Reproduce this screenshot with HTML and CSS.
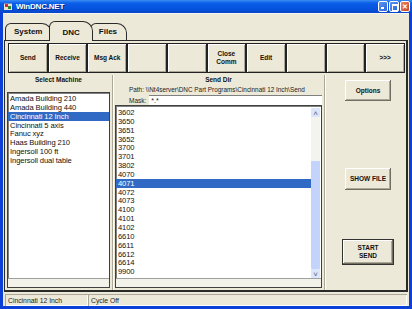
FILE: index.html
```html
<!DOCTYPE html>
<html lang="en">
<head>
    <meta charset="UTF-8">
    <title>WinDNC.NET</title>
    <link rel="stylesheet" href="styles.css">
</head>
<body>
    <div class="window">
        <div class="titlebar">
            <svg class="app-icon" width="9" height="9" viewBox="0 0 9 9">
                <rect x="0" y="1" width="8" height="7" fill="#e8e4d0"/>
                <rect x="1" y="2" width="3" height="3" fill="#d23"/>
                <rect x="4" y="4" width="3" height="3" fill="#2a8a2a"/>
                <rect x="0" y="1" width="8" height="1" fill="#6a8ad8"/>
            </svg>
            <span class="title">WinDNC.NET</span>
            <div class="caption-buttons">
                <span class="cap cap-min"><i></i></span>
                <span class="cap cap-max"><i></i></span>
                <span class="cap cap-close">&#x2715;</span>
            </div>
        </div>

        <div class="client">
            <div class="tabs">
                <div class="tab">System</div>
                <div class="tab active">DNC</div>
                <div class="tab">Files</div>
            </div>

            <div class="panel">
                <div class="toolbar">
                    <button>Send</button>
                    <button>Receive</button>
                    <button>Msg Ack</button>
                    <button></button>
                    <button></button>
                    <button>Close<br>Comm</button>
                    <button>Edit</button>
                    <button></button>
                    <button></button>
                    <button>&gt;&gt;&gt;</button>
                </div>

                <div class="content">
                    <div class="col col-machines">
                        <div class="heading">Select Machine</div>
                        <div class="listbox machines">
                            <div class="rows">
                                <div class="row">Amada Building 210</div>
                                <div class="row">Amada Building 440</div>
                                <div class="row selected">Cincinnati 12 Inch</div>
                                <div class="row">Cincinnati 5 axis</div>
                                <div class="row">Fanuc xyz</div>
                                <div class="row">Haas Building 210</div>
                                <div class="row">Ingersoll 100 ft</div>
                                <div class="row">Ingersoll dual table</div>
                            </div>
                            <div class="hscroll"></div>
                        </div>
                    </div>

                    <div class="col col-files">
                        <div class="heading">Send Dir</div>
                        <div class="path">Path: \\Nt4server\DNC Part Programs\Cincinnati 12 Inch\Send</div>
                        <div class="mask">
                            <span class="mask-label">Mask:</span>
                            <div class="mask-input">*.*</div>
                        </div>
                        <div class="listbox files">
                            <div class="files-body">
                                <div class="rows">
                                    <div class="row">3602</div>
                                    <div class="row">3650</div>
                                    <div class="row">3651</div>
                                    <div class="row">3652</div>
                                    <div class="row">3700</div>
                                    <div class="row">3701</div>
                                    <div class="row">3802</div>
                                    <div class="row">4070</div>
                                    <div class="row selected">4071</div>
                                    <div class="row">4072</div>
                                    <div class="row">4073</div>
                                    <div class="row">4100</div>
                                    <div class="row">4101</div>
                                    <div class="row">4102</div>
                                    <div class="row">6610</div>
                                    <div class="row">6611</div>
                                    <div class="row">6612</div>
                                    <div class="row">6614</div>
                                    <div class="row">9900</div>
                                </div>
                                <div class="vscroll">
                                    <span class="arrow">&#x2C4;</span>
                                    <div class="track"><div class="thumb"></div></div>
                                    <span class="arrow">&#x2C5;</span>
                                </div>
                            </div>
                            <div class="hscroll"></div>
                        </div>
                    </div>

                    <div class="col col-actions">
                        <button class="action options">Options</button>
                        <button class="action show-file">SHOW FILE</button>
                        <button class="action start-send">START<br>SEND</button>
                    </div>
                </div>
            </div>

            <div class="statusbar">
                <div class="status-cell machine">Cincinnati 12 Inch</div>
                <div class="status-cell cycle">Cycle Off</div>
            </div>
        </div>
    </div>
</body>
</html>
```

FILE: styles.css
```css
body {
    margin: 0;
    font-family: 'Liberation Sans', Arial, sans-serif;
    background: #ffffff;
}

.window {
    width: 412px;
    height: 309px;
    box-sizing: border-box;
    display: flex;
    flex-direction: column;
    background: #0b3fd6;
    padding: 0 3px 3px;
}

.titlebar {
    height: 16px;
    margin: 0 -3px;
    display: flex;
    align-items: center;
    padding: 0 2px 0 4px;
    background: linear-gradient(to bottom, #3b8cf5 0%, #0a5de6 25%, #0551dd 70%, #0a46c8 100%);
}

.app-icon {
    margin-right: 3px;
}

.title {
    color: #ffffff;
    font-size: 8px;
    font-weight: bold;
    letter-spacing: -0.2px;
    text-shadow: 1px 1px 0 #0a2a88;
}

.caption-buttons {
    margin-left: auto;
    display: flex;
    gap: 1px;
}

.cap {
    width: 10px;
    height: 11px;
    border: 1px solid #ffffff;
    border-radius: 2px;
    background: linear-gradient(to bottom right, #5d95f3, #2a63db);
    position: relative;
    box-sizing: border-box;
    color: #ffffff;
    font-size: 7px;
    font-weight: bold;
    line-height: 9px;
    text-align: center;
}

.cap-min i {
    position: absolute;
    left: 2px;
    bottom: 2px;
    width: 3px;
    height: 2px;
    background: #ffffff;
}

.cap-max i {
    position: absolute;
    left: 2px;
    top: 2px;
    width: 4px;
    height: 4px;
    border: 1px solid #ffffff;
    border-top-width: 2px;
}

.cap-close {
    background: linear-gradient(to bottom right, #e8876a, #c94520);
}

.client {
    flex: 1;
    background: #ece9d8;
    display: flex;
    flex-direction: column;
}

.tabs {
    display: flex;
    align-items: flex-end;
    height: 26px;
    padding-left: 2px;
    border-top: 1px solid #f6f5ee;
}

.tab {
    height: 16px;
    margin-right: -3px;
    padding: 0 9px 0 8px;
    border: 1px solid #2a2a2a;
    border-bottom: none;
    border-radius: 6px 10px 0 0;
    background: #ece9d8;
    font-size: 8px;
    font-weight: bold;
    line-height: 16px;
    color: #111;
}

.tab.active {
    height: 19px;
    line-height: 21px;
    padding: 0 12px;
    position: relative;
    z-index: 1;
    margin-bottom: -1px;
}

.panel {
    height: 249px;
    margin: 0 1px 0 1px;
    border: 1px solid #2a2a2a;
    border-right-width: 2px;
    border-bottom-width: 2px;
    display: flex;
    flex-direction: column;
}

.toolbar {
    display: grid;
    grid-template-columns: repeat(10, 1fr);
    padding: 2px 1px 0 3px;
    height: 30px;
}

button {
    font-family: 'Liberation Sans', Arial, sans-serif;
    font-size: 6.5px;
    font-weight: bold;
    color: #111;
    background: #ece9d8;
    border: 1px solid #222;
    box-shadow: inset 1px 1px 0 #ffffff, inset -1px -1px 0 #aca899;
    padding: 0;
    line-height: 8px;
}

.content {
    flex: 1;
    display: grid;
    grid-template-columns: 108px 212px 1fr;
    padding-top: 2px;
}

.col {
    display: flex;
    flex-direction: column;
    padding: 0 2px;
}

.col-machines,
.col-files {
    border-right: 1px solid #aca899;
    box-shadow: 1px 0 0 #ffffff;
}

.heading {
    font-size: 6.5px;
    font-weight: bold;
    text-align: center;
    height: 10px;
    line-height: 10px;
    color: #111;
}

.col-machines .heading {
    margin-bottom: 7px;
}

.path {
    font-size: 6.4px;
    color: #222;
    height: 10px;
    line-height: 10px;
    padding-left: 14px;
    white-space: nowrap;
}

.mask {
    display: flex;
    align-items: center;
    font-size: 6.5px;
    color: #222;
    height: 10px;
    padding-left: 14px;
}

.mask-label {
    margin-right: 3px;
}

.mask-input {
    flex: 1;
    height: 9px;
    line-height: 9px;
    background: #ffffff;
    border-top: 1px solid #808080;
    font-size: 7px;
    padding-left: 2px;
}

.listbox {
    flex: 1;
    margin-bottom: 2px;
    background: #ffffff;
    border: 1px solid #404040;
    box-shadow: inset 1px 1px 0 #808080;
    display: flex;
    flex-direction: column;
    font-size: 7.6px;
    color: #111;
}

.rows {
    flex: 1;
    padding-top: 1px;
}

.row {
    height: 8.85px;
    line-height: 9px;
    padding-left: 2px;
    white-space: nowrap;
    letter-spacing: -0.1px;
}

.row.selected {
    background: #316ac5;
    color: #ffffff;
}

.hscroll {
    height: 8px;
    border-top: 1px solid #a0a0a0;
    background: #f2f1ea;
}

.files .rows {
    padding-top: 2px;
}

.files-body {
    flex: 1;
    display: flex;
}

.vscroll {
    width: 9px;
    margin: 2px 1px 0 0;
    display: flex;
    flex-direction: column;
    background: #f4f4ef;
}

.arrow {
    height: 9px;
    font-size: 8px;
    line-height: 11px;
    text-align: center;
    color: #4d6185;
    background: #dce6fa;
    border-radius: 1px;
}

.track {
    flex: 1;
    display: flex;
    flex-direction: column;
    justify-content: flex-end;
}

.thumb {
    height: 108px;
    background: #c3d3fb;
    border-radius: 1px;
}

.col-actions {
    align-items: center;
    padding: 5px 0 0 5px;
}

.action {
    width: 46px;
    height: 21px;
    border: none;
    box-shadow: inset -1px -1px 0 #716f64, inset 1px 1px 0 #ffffff, inset -2px -2px 0 #aca899;
    font-size: 6.5px;
}

.show-file {
    margin-top: 67px;
    height: 22px;
}

.start-send {
    margin-top: 49px;
    width: 52px;
    height: 26px;
    border: 1px solid #333;
}

.statusbar {
    display: flex;
    height: 12px;
    margin-top: 2px;
    padding: 0 2px;
}

.status-cell {
    font-size: 6.8px;
    color: #222;
    line-height: 12px;
    padding-left: 2px;
    border-top: 1px solid #aca899;
    border-left: 1px solid #aca899;
    box-shadow: inset -1px -1px 0 #ffffff;
}

.status-cell.machine {
    width: 80px;
}

.status-cell.cycle {
    flex: 1;
}
```
